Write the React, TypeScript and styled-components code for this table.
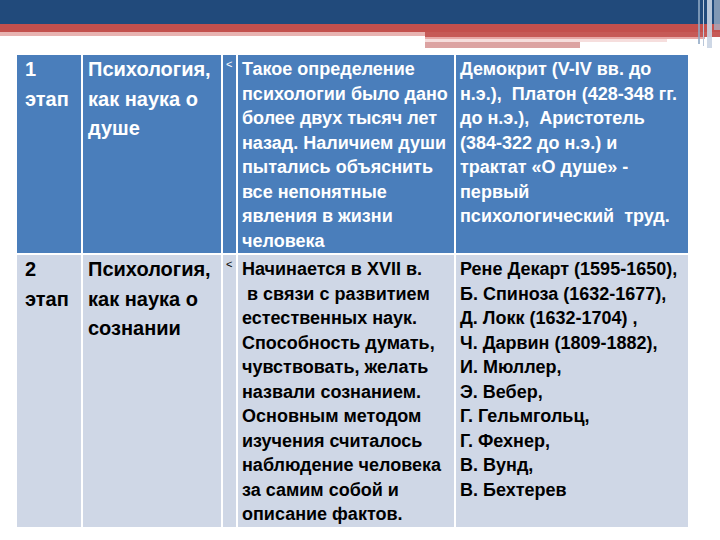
import React from "react";
import styled, { createGlobalStyle } from "styled-components";

const Global = createGlobalStyle`
  html, body { margin: 0; padding: 0; background: #ffffff; }
  body { width: 720px; height: 540px; overflow: hidden; font-family: "Liberation Sans", Arial, sans-serif; }
`;

const Slide = styled.div`
  width: 720px;
  height: 540px;
  display: flex;
  flex-direction: column;
  background: #ffffff;
`;

const Banner = styled.svg`
  display: block;
  width: 720px;
  height: 50px;
  flex: none;
`;

const Table = styled.div`
  margin: 5px 0 0 17px;
  width: 671px;
  display: grid;
  grid-template-columns: 64px 138px 13px 216px 232px;
  column-gap: 2px;
  row-gap: 2px;
  background: #ffffff;
`;

const Cell = styled.div<{ $dark?: boolean; $pad: number; $big?: boolean }>`
  background: ${(p) => (p.$dark ? "#4a7ebb" : "#cfd7e6")};
  color: ${(p) => (p.$dark ? "#ffffff" : "#000000")};
  padding: ${(p) => (p.$big ? "0" : "2px")} 0 0 ${(p) => p.$pad}px;
  font-weight: bold;
  font-size: ${(p) => (p.$big ? "20px" : "18px")};
  line-height: ${(p) => (p.$big ? "29.5px" : "24.5px")};
  white-space: pre;
`;

const Line = styled.div`
  display: block;
`;

const Mark = styled.span`
  display: block;
  font-size: 11px;
  line-height: 14px;
  font-weight: normal;
  margin-top: 0px;
`;

type RowData = { a: string[]; b: string[]; c: string[]; d: string[] };

const rows: RowData[] = [
  {
    a: ["1", "этап"],
    b: ["Психология,", "как наука о", "душе"],
    c: [
      "Такое определение",
      "психологии было дано",
      "более двух тысяч лет",
      "назад. Наличием души",
      "пытались объяснить",
      "все непонятные",
      "явления в жизни",
      "человека",
    ],
    d: [
      "Демокрит (V-IV вв. до",
      "н.э.),  Платон (428-348 гг.",
      "до н.э.),  Аристотель",
      "(384-322 до н.э.) и",
      "трактат «О душе» -",
      "первый",
      "психологический  труд.",
    ],
  },
  {
    a: ["2", "этап"],
    b: ["Психология,", "как наука о", "сознании"],
    c: [
      "Начинается в XVII в.",
      " в связи с развитием",
      "естественных наук.",
      "Способность думать,",
      "чувствовать, желать",
      "назвали сознанием.",
      "Основным методом",
      "изучения считалось",
      "наблюдение человека",
      "за самим собой и",
      "описание фактов.",
    ],
    d: [
      "Рене Декарт (1595-1650),",
      "Б. Спиноза (1632-1677),",
      "Д. Локк (1632-1704) ,",
      "Ч. Дарвин (1809-1882),",
      "И. Мюллер,",
      "Э. Вебер,",
      "Г. Гельмгольц,",
      "Г. Фехнер,",
      "В. Вунд,",
      "В. Бехтерев",
    ],
  },
];

const Lines = ({ items }: { items: string[] }) => (
  <>
    {items.map((t, i) => (
      <Line key={i}>{t}</Line>
    ))}
  </>
);

export default function App() {
  return (
    <Slide>
      <Global />
      <Banner viewBox="0 0 720 50">
        <rect x="0" y="0" width="720" height="24" fill="#214a7b" />
        <rect x="0" y="24" width="720" height="8" fill="#c3504d" />
        <rect x="0" y="32" width="425" height="4" fill="#e8b3b1" />
        <rect x="425" y="32" width="295" height="5" fill="#c65a57" />
        <rect x="425" y="37" width="280" height="2" fill="#e7a9a7" />
        <rect x="425" y="39" width="242" height="3" fill="#f6dedd" />
        <rect x="425" y="42" width="155" height="6" fill="#dca3a2" />
        <rect x="698" y="0" width="2" height="44" fill="#8fa7c4" opacity="0.8" />
        <rect x="703" y="0" width="1" height="46" fill="#b9c7d9" />
        <rect x="707" y="0" width="5" height="48" fill="#c9d4e3" opacity="0.9" />
        <rect x="714" y="0" width="6" height="30" fill="#a9b9cf" opacity="0.7" />
      </Banner>
      <Table>
        {rows.map((r, i) => (
          <React.Fragment key={i}>
            <Cell $dark={i === 0} $pad={8} $big>
              <Lines items={r.a} />
            </Cell>
            <Cell $dark={i === 0} $pad={5} $big>
              <Lines items={r.b} />
            </Cell>
            <Cell $dark={i === 0} $pad={3}>
              <Mark>&lt;</Mark>
            </Cell>
            <Cell $dark={i === 0} $pad={4}>
              <Lines items={r.c} />
            </Cell>
            <Cell $dark={i === 0} $pad={4}>
              <Lines items={r.d} />
            </Cell>
          </React.Fragment>
        ))}
      </Table>
    </Slide>
  );
}
